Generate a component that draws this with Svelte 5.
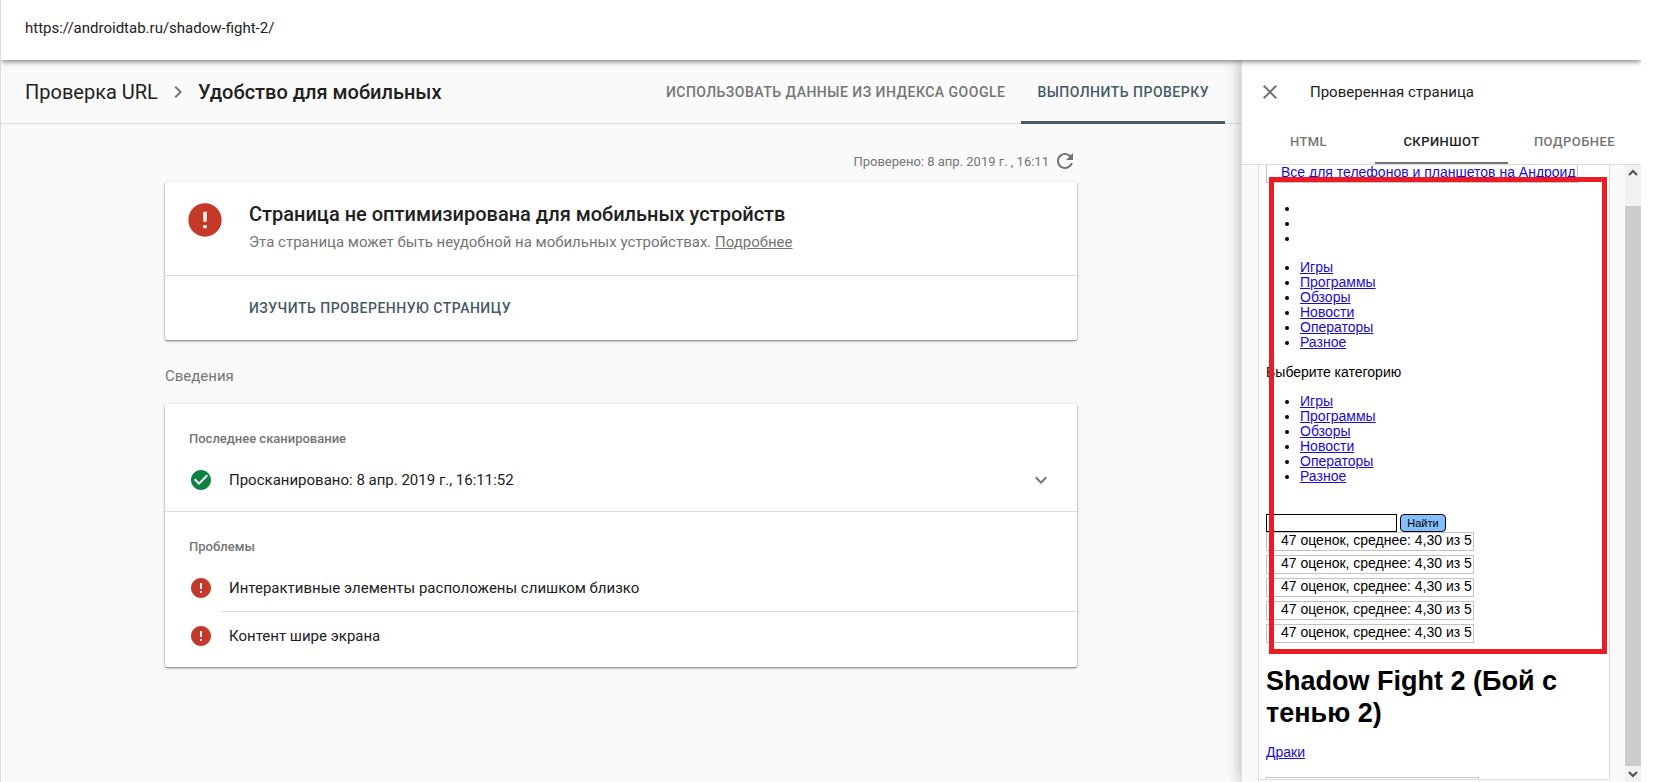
<script lang="ts">
  const sections = ["Игры", "Программы", "Обзоры", "Новости", "Операторы", "Разное"];
  const issues = ["Интерактивные элементы расположены слишком близко", "Контент шире экрана"];
  const panelTabs = ["HTML", "Скриншот", "Подробнее"];
  const ratings = [1, 2, 3, 4, 5];

  let activeTab = $state("Скриншот");
  let query = $state("");
</script>

{#snippet errorIcon()}
  <svg class="icon error" viewBox="0 0 24 24" aria-hidden="true">
    <path d="M12 2C6.48 2 2 6.48 2 12s4.48 10 10 10 10-4.48 10-10S17.52 2 12 2zm1 15h-2v-2h2v2zm0-4h-2V7h2v6z" />
  </svg>
{/snippet}

{#snippet sectionList()}
  <ul>
    {#each sections as name}
      <li><a href="#top">{name}</a></li>
    {/each}
  </ul>
{/snippet}

<div class="app">
  <header class="urlbar">https://androidtab.ru/shadow-fight-2/</header>

  <div class="body">
    <main>
      <div class="subhead">
        <nav class="crumbs">
          <a href="#inspect">Проверка URL</a>
          <svg class="icon" viewBox="0 0 24 24" aria-hidden="true">
            <path d="M10 6L8.59 7.41 13.17 12l-4.58 4.59L10 18l6-6z" />
          </svg>
          <h1>Удобство для мобильных</h1>
        </nav>
        <div class="modes">
          <button>Использовать данные из индекса Google</button>
          <button class="active">Выполнить проверку</button>
        </div>
      </div>

      <div class="content">
        <div class="checked">
          <span>Проверено: 8 апр. 2019 г. , 16:11</span>
          <button aria-label="Обновить">
            <svg class="icon" viewBox="0 0 24 24" aria-hidden="true">
              <path d="M17.65 6.35C16.2 4.9 14.21 4 12 4c-4.42 0-7.99 3.58-7.99 8s3.57 8 7.99 8c3.73 0 6.84-2.55 7.73-6h-2.08c-.82 2.33-3.04 4-5.65 4-3.31 0-6-2.69-6-6s2.69-6 6-6c1.66 0 3.14.69 4.22 1.78L13 11h7V4l-2.35 2.35z" />
            </svg>
          </button>
        </div>

        <section class="card">
          <div class="verdict">
            {@render errorIcon()}
            <div>
              <h2>Страница не оптимизирована для мобильных устройств</h2>
              <p>Эта страница может быть неудобной на мобильных устройствах. <a href="#more">Подробнее</a></p>
            </div>
          </div>
          <div class="explore">
            <button>Изучить проверенную страницу</button>
          </div>
        </section>

        <h3>Сведения</h3>

        <section class="card">
          <div class="group">
            <h4>Последнее сканирование</h4>
            <div class="row">
              <svg class="icon ok" viewBox="0 0 24 24" aria-hidden="true">
                <path d="M12 2C6.48 2 2 6.48 2 12s4.48 10 10 10 10-4.48 10-10S17.52 2 12 2zm-2 15l-5-5 1.41-1.41L10 14.17l7.59-7.59L19 8l-9 9z" />
              </svg>
              <div class="row-text">
                Просканировано: 8 апр. 2019 г., 16:11:52
                <button aria-label="Развернуть">
                  <svg class="icon" viewBox="0 0 24 24" aria-hidden="true">
                    <path d="M16.59 8.59L12 13.17 7.41 8.59 6 10l6 6 6-6z" />
                  </svg>
                </button>
              </div>
            </div>
          </div>
          <div class="group">
            <h4>Проблемы</h4>
            {#each issues as issue}
              <div class="row">
                {@render errorIcon()}
                <div class="row-text">{issue}</div>
              </div>
            {/each}
          </div>
        </section>
      </div>
    </main>

    <aside>
      <div class="panel-head">
        <button aria-label="Закрыть">
          <svg class="icon" viewBox="0 0 24 24" aria-hidden="true">
            <path d="M19 6.41L17.59 5 12 10.59 6.41 5 5 6.41 10.59 12 5 17.59 6.41 19 12 13.41 17.59 19 19 17.59 13.41 12z" />
          </svg>
        </button>
        <span>Проверенная страница</span>
      </div>
      <div class="tabs">
        {#each panelTabs as tab}
          <button class:active={activeTab === tab} onclick={() => (activeTab = tab)}>{tab}</button>
        {/each}
      </div>

      <div class="viewer">
        <div class="device">
          <div class="shot">
            <a class="boxed title" href="#top">Все для телефонов и планшетов на Андроид</a>
            <ul>
              <li></li>
              <li></li>
              <li></li>
            </ul>
            {@render sectionList()}
            <p>Выберите категорию</p>
            {@render sectionList()}
            <form onsubmit={(e) => e.preventDefault()}>
              <input type="text" aria-label="Поиск" bind:value={query} />
              <button>Найти</button>
            </form>
            <div class="ratings">
              {#each ratings as r (r)}
                <div class="boxed">47 оценок, среднее: 4,30 из 5</div>
              {/each}
            </div>
            <h2>Shadow Fight 2 (Бой с тенью 2)</h2>
            <a href="#fights">Драки</a>
            <div class="boxed thumb-box"></div>
          </div>
          <div class="highlight"></div>
        </div>
        <div class="scrollbar">
          <svg viewBox="0 0 16 16" aria-hidden="true"><path d="M4 10l4-4 4 4" /></svg>
          <div class="thumb"></div>
          <svg viewBox="0 0 16 16" aria-hidden="true"><path d="M4 6l4 4 4-4" /></svg>
        </div>
      </div>
    </aside>
  </div>
</div>

<style>
  :global(body) {
    background: #fff;
  }
  .app {
    display: flex;
    flex-direction: column;
    height: 100vh;
    box-sizing: border-box;
    margin-right: 13px;
    border-left: 1px solid #dcdcdc;
    font-family: Roboto, "Liberation Sans", sans-serif;
    font-size: 15px;
    color: #212121;
  }
  h1,
  h2,
  h3,
  h4,
  p {
    margin: 0;
  }
  button {
    padding: 0;
    border: 0;
    background: none;
    font: inherit;
    color: inherit;
    cursor: pointer;
  }
  .icon {
    display: block;
    flex: none;
    width: 24px;
    height: 24px;
    fill: #757575;
  }
  .icon.error {
    fill: #c53929;
  }
  .icon.ok {
    fill: #0b8043;
  }

  .urlbar {
    position: relative;
    z-index: 3;
    flex: none;
    height: 60px;
    padding: 0 24px;
    box-sizing: border-box;
    line-height: 56px;
    background: #fff;
    box-shadow: 0 1px 6px rgba(0, 0, 0, 0.6);
    clip-path: inset(0 0 -12px 0);
  }
  .body {
    display: flex;
    flex: 1;
    min-height: 0;
  }
  main {
    flex: 1;
    min-width: 0;
    background: #fafafa;
  }
  .subhead {
    display: flex;
    justify-content: space-between;
    height: 64px;
    padding: 0 16px 0 24px;
    box-sizing: border-box;
    border-bottom: 1px solid #dcdcdc;
  }
  .crumbs {
    display: flex;
    align-items: center;
    gap: 8px;
    font-size: 20px;
  }
  .crumbs a {
    color: inherit;
    text-decoration: none;
  }
  .crumbs h1 {
    font-size: 20px;
    font-weight: 500;
  }
  .modes {
    display: flex;
  }
  .modes button {
    height: 64px;
    padding: 3px 16px 0;
    box-sizing: border-box;
    border-bottom: 3px solid transparent;
    font-size: 14px;
    font-weight: 500;
    letter-spacing: 0.035em;
    text-transform: uppercase;
    color: #757575;
  }
  .modes .active {
    border-color: #455a64;
    color: #455a64;
  }

  .content {
    max-width: 912px;
    margin: 0 auto;
  }
  .checked {
    display: flex;
    justify-content: flex-end;
    align-items: center;
    gap: 4px;
    height: 58px;
    padding-top: 16px;
    box-sizing: border-box;
    font-size: 13px;
    color: #757575;
  }
  .card {
    border-radius: 2px;
    background: #fff;
    box-shadow: 0 1px 3px rgba(0, 0, 0, 0.4), 0 1px 1px rgba(0, 0, 0, 0.2);
  }
  .verdict {
    display: flex;
    gap: 24px;
    height: 94px;
    padding: 18px 20px 0;
    box-sizing: border-box;
    border-bottom: 1px solid #dcdcdc;
  }
  .verdict .icon {
    width: 40px;
    height: 40px;
  }
  .verdict h2 {
    font-size: 20px;
    font-weight: 500;
    line-height: 28px;
  }
  .verdict p {
    line-height: 28px;
    color: #757575;
  }
  .verdict a {
    color: inherit;
  }
  .explore {
    display: flex;
    align-items: center;
    height: 64px;
    padding-left: 84px;
  }
  .explore button {
    font-size: 14px;
    font-weight: 500;
    letter-spacing: 0.035em;
    text-transform: uppercase;
    color: #455a64;
  }
  h3 {
    padding: 24px 0 16px;
    font-size: 15px;
    font-weight: 400;
    line-height: 24px;
    color: #757575;
  }
  .group {
    padding: 22px 0 7px 24px;
  }
  .group + .group {
    border-top: 1px solid #dcdcdc;
  }
  h4 {
    margin-bottom: 4px;
    font-size: 13px;
    font-weight: 500;
    line-height: 26px;
    color: #757575;
  }
  .row {
    display: flex;
    align-items: center;
    gap: 8px;
    height: 48px;
  }
  .row-text {
    display: flex;
    flex: 1;
    align-items: center;
    justify-content: space-between;
    align-self: stretch;
    padding: 0 24px 0 8px;
  }
  .row:not(:last-child) .row-text {
    border-bottom: 1px solid #dcdcdc;
  }

  aside {
    position: relative;
    z-index: 1;
    display: flex;
    flex-direction: column;
    width: 399px;
    border-left: 1px solid #e0e0e0;
    background: #fff;
    box-shadow: 0 0 14px rgba(0, 0, 0, 0.3);
    clip-path: inset(0 0 0 -20px);
  }
  .panel-head {
    display: flex;
    align-items: center;
    gap: 28px;
    height: 56px;
    padding: 4px 16px 0;
    font-size: 15px;
  }
  .tabs {
    display: flex;
    height: 44px;
    border-bottom: 1px solid #dcdcdc;
  }
  .tabs button {
    flex: 1;
    border-bottom: 2px solid transparent;
    font-size: 13px;
    font-weight: 500;
    letter-spacing: 0.035em;
    text-transform: uppercase;
    color: #757575;
  }
  .tabs .active {
    border-color: #757575;
    color: #212121;
  }

  .viewer {
    display: flex;
    flex: 1;
    justify-content: space-between;
    min-height: 0;
    padding-left: 16px;
    background: #fafafa;
  }
  .device {
    position: relative;
    flex: 1;
    margin: 0 15px 2px 0;
    border: 1px solid #dcdcdc;
    border-top: 0;
    background: #fff;
    overflow: hidden;
  }
  .shot {
    padding: 0 7px;
    font-family: "Liberation Sans", Arial, sans-serif;
    font-size: 14px;
    line-height: 15px;
    color: #000;
  }
  .shot a {
    color: #1a0dcc;
  }
  .boxed {
    width: fit-content;
    padding: 0 1px 2px 14px;
    border: 1px solid #c4c4c4;
  }
  .title {
    display: block;
    border-top: 0;
  }
  .shot ul {
    margin: 0 0 15px;
    padding-left: 34px;
  }
  .shot .title + ul {
    margin: 18px 0 14px;
  }
  .shot li {
    height: 15px;
  }
  .shot p {
    margin-bottom: 14px;
  }
  .shot form {
    display: flex;
    gap: 3px;
    margin-top: 30px;
  }
  .shot input {
    width: 131px;
    height: 18px;
    padding: 1px;
    box-sizing: border-box;
    border: 1px solid #000;
    font: inherit;
  }
  .shot form button {
    width: 46px;
    height: 18px;
    border: 1px solid #000;
    border-radius: 4px;
    background: #84bffc;
    font-size: 11px;
  }
  .ratings {
    display: flex;
    flex-direction: column;
    gap: 4px;
  }
  .shot h2 {
    margin: 22px 0 16px;
    font-size: 27px;
    line-height: 32px;
  }
  .thumb-box {
    width: 196px;
    height: 40px;
    margin-top: 17px;
  }
  /* red marker frame laid over the page preview */
  .highlight {
    position: absolute;
    top: 12px;
    left: 10px;
    right: 2px;
    height: 467px;
    border: 5px solid #ec1c24;
  }

  .scrollbar {
    display: flex;
    flex-direction: column;
    width: 16px;
    background: #f1f1f1;
  }
  .scrollbar svg {
    flex: none;
    height: 16px;
    fill: none;
    stroke: #505050;
    stroke-width: 2;
  }
  .thumb {
    flex: 1;
    margin-top: 25px;
    background: #cdcdcd;
  }
</style>
